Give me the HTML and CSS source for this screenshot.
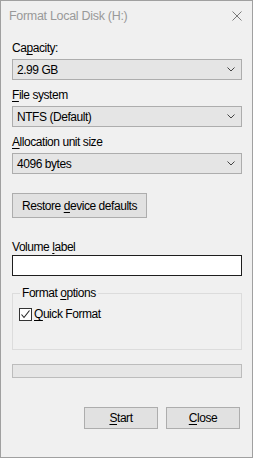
FILE: index.html
```html
<!DOCTYPE html>
<html lang="en">
<head>
    <meta charset="UTF-8">
    <meta name="viewport" content="width=device-width, initial-scale=1.0">
    <title>Format Local Disk (H:)</title>
    <link rel="stylesheet" href="styles.css">
</head>
<body>
    <div class="window">
        <div class="titlebar">
            <span class="title">Format Local Disk (H:)</span>
            <svg class="close-x" width="10" height="10" viewBox="0 0 10 10">
                <path d="M0.5 0.5 L9.5 9.5 M9.5 0.5 L0.5 9.5" stroke="#7a7a7a" stroke-width="1" fill="none"/>
            </svg>
        </div>

        <div class="content">
            <div class="label first">Ca<u>p</u>acity:</div>
            <div class="combo">
                <span>2.99 GB</span>
                <svg class="chev" width="8" height="5" viewBox="0 0 8 5"><path d="M0.5 0.5 L4 4 L7.5 0.5" stroke="#444" fill="none"/></svg>
            </div>

            <div class="label"><u>F</u>ile system</div>
            <div class="combo">
                <span>NTFS (Default)</span>
                <svg class="chev" width="8" height="5" viewBox="0 0 8 5"><path d="M0.5 0.5 L4 4 L7.5 0.5" stroke="#444" fill="none"/></svg>
            </div>

            <div class="label"><u>A</u>llocation unit size</div>
            <div class="combo">
                <span>4096 bytes</span>
                <svg class="chev" width="8" height="5" viewBox="0 0 8 5"><path d="M0.5 0.5 L4 4 L7.5 0.5" stroke="#444" fill="none"/></svg>
            </div>

            <button class="btn restore">Restore <u>d</u>evice defaults</button>

            <div class="label volume">Volume <u>l</u>abel</div>
            <div class="textbox"></div>

            <fieldset class="options">
                <legend>Format <u>o</u>ptions</legend>
                <label class="check">
                    <span class="box">
                        <svg width="11" height="11" viewBox="0 0 11 11"><path d="M1.5 5.5 L4 8.5 L9.5 1.5" stroke="#222" stroke-width="1.1" fill="none"/></svg>
                    </span>
                    <span><u>Q</u>uick Format</span>
                </label>
            </fieldset>

            <div class="progress"></div>

            <div class="actions">
                <button class="btn"><u>S</u>tart</button>
                <button class="btn"><u>C</u>lose</button>
            </div>
        </div>
    </div>
</body>
</html>
```

FILE: styles.css
```css
* {
    box-sizing: border-box;
}
body {
    margin: 0;
    font-family: "Liberation Sans", Arial, sans-serif;
    font-size: 12px;
    letter-spacing: -0.45px;
    color: #000;
    background: #fff;
}
u {
    text-decoration: underline;
    text-underline-offset: 2px;
}
.window {
    width: 253px;
    height: 458px;
    border: 1px solid #a0a0a0;
    background-color: #f0f0f0;
}
.titlebar {
    height: 29px;
    display: flex;
    align-items: center;
    justify-content: space-between;
    padding: 0 10px 0 8px;
    background-color: #f0f0f0;
}
.title {
    color: #999;
    font-size: 12.5px;
    letter-spacing: -0.3px;
}
.content {
    padding: 0 10px 0 11px;
    display: flex;
    flex-direction: column;
}
.label {
    height: 16px;
    line-height: 16px;
    margin-top: 7px;
}
.label.first {
    margin-top: 10px;
}
.combo {
    height: 21px;
    margin-top: 3px;
    border: 1px solid #adadad;
    background-color: #e5e5e5;
    display: flex;
    align-items: center;
    justify-content: space-between;
    padding: 0 6px 0 4px;
}
.btn {
    font-family: inherit;
    font-size: 12px;
    letter-spacing: -0.45px;
    color: #000;
    background-color: #e1e1e1;
    border: 1px solid #adadad;
    padding: 0;
    border-radius: 0;
}
.restore {
    width: 135px;
    height: 25px;
    margin-top: 19px;
    align-self: flex-start;
}
.label.volume {
    margin-top: 21px;
}
.textbox {
    height: 21px;
    border: 1px solid #1e1e1e;
    background-color: #fff;
}
.options {
    margin: 10px 0 0 0;
    padding: 0 6px;
    height: 64px;
    border: 1px solid #dcdcdc;
}
.options legend {
    padding: 0 2px;
    margin-left: 1px;
    line-height: 14px;
}
.check {
    display: flex;
    align-items: center;
    gap: 2px;
    margin-top: 7px;
}
.box {
    width: 13px;
    height: 13px;
    border: 1px solid #333;
    background-color: #fff;
    display: flex;
    align-items: center;
    justify-content: center;
}
.progress {
    height: 14px;
    margin-top: 14px;
    border: 1px solid #bcbcbc;
    background-color: #e6e6e6;
}
.actions {
    display: flex;
    justify-content: flex-end;
    gap: 8px;
    margin-top: 29px;
    padding-right: 2px;
}
.actions .btn {
    width: 74px;
    height: 22px;
}
```
